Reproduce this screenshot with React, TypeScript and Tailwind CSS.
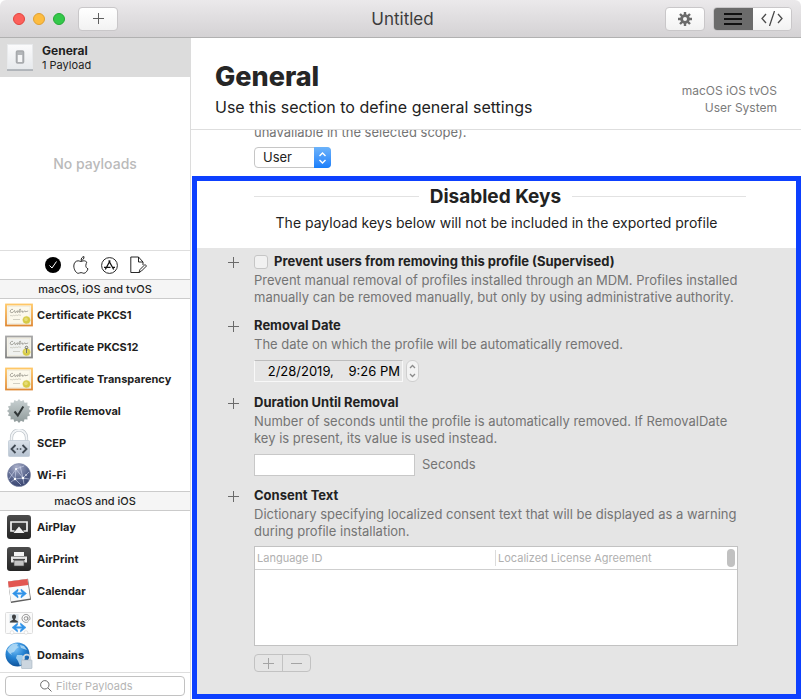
import type { ReactNode } from "react";

const PlusGlyph = ({ className = "" }: { className?: string }) => (
  <svg width="11" height="11" viewBox="0 0 11 11" className={className} aria-hidden="true">
    <path d="M5.5 0v11M0 5.5h11" stroke="currentColor" strokeWidth="1" fill="none" />
  </svg>
);

const GearIcon = () => (
  <svg width="14" height="14" viewBox="0 0 14 14" aria-hidden="true">
    <g stroke="#6b6b6b" strokeWidth="2.4">
      <path d="M7 0v14M0 7h14M2 2l10 10M12 2L2 12" />
    </g>
    <circle cx="7" cy="7" r="4.8" fill="#6b6b6b" />
    <circle cx="7" cy="7" r="2" fill="#f8f8f8" />
  </svg>
);

const GeneralIcon = () => (
  <svg width="26" height="27" viewBox="0 0 26 27" aria-hidden="true">
    <defs>
      <linearGradient id="plate" x1="0" y1="0" x2="0" y2="1">
        <stop offset="0" stopColor="#fbfbfc" />
        <stop offset="1" stopColor="#e6e9ec" />
      </linearGradient>
    </defs>
    <rect x="0.5" y="0.5" width="25" height="25" fill="url(#plate)" stroke="#e8eaec" />
    <path d="M0 26h26" stroke="#9da3a9" strokeWidth="1.4" />
    <rect x="9.5" y="7" width="7" height="12" rx="1" fill="#b4b7ba" stroke="#a6a9ac" strokeWidth="1.6" />
    <rect x="10.8" y="11" width="4.4" height="7" fill="#f5f6f7" />
  </svg>
);

const CertificateIcon = ({ gray = false }: { gray?: boolean }) => {
  const id = gray ? "certGray" : "certGold";
  return (
    <svg width="28" height="24" viewBox="0 0 28 24" aria-hidden="true">
      <defs>
        <linearGradient id={id} x1="0" y1="0" x2="0" y2="1">
          <stop offset="0" stopColor={gray ? "#a5a5a5" : "#ffc766"} />
          <stop offset="1" stopColor={gray ? "#858585" : "#e08a35"} />
        </linearGradient>
      </defs>
      <rect x="1" y="1.5" width="26" height="21" fill="#f9f7ee" stroke={`url(#${id})`} strokeWidth="1.8" />
      <rect x="3" y="3.5" width="22" height="17" fill={gray ? "#f0f1ef" : "#fcf9ec"} stroke="#e7e2d2" strokeWidth="0.5" />
      <path
        d="M8 6.400c-3-.8-4 3.800-1 3.200 2-.3 1.500-2 2.600-2s-.6 2.200.8 2c1-.2.9-1.900 2-1.800s-.8 2 .4 1.700 1.500-4 2.500-3.400-2 3.600-.5 3.300 1.300-1.700 2.300-1.700-.4 1.900.8 1.700 1-1.700 2-1.600-.2 1.600 1.300.8l2-.6"
        fill="none"
        stroke="#77766d"
        strokeWidth="0.6"
      />
      <path d="M5 13c1-1.600 2 .8 3-.4s1.400.9 2.400-.2 1.500.9 2.600-.2 1.600.7 3-.1M8 16.500h7" fill="none" stroke="#b3b2a6" strokeWidth="0.6" />
      <circle cx="21.500" cy="17" r="3.600" fill="#d6ca45" stroke="#d6ca45" strokeWidth="0.800" strokeDasharray="1 .6" />
      <circle cx="21" cy="16.400" r="1.800" fill="#e6dc74" />
      {gray && <path d="M21.500 18v-5M20.200 12.500a1.300 1.300 0 1 1 2.600 0 1.300 1.300 0 0 1-2.600 0" fill="none" stroke="#77786e" strokeWidth="1" />}
    </svg>
  );
};

const sealPoints = Array.from({ length: 32 }, (_, i) => {
  const r = i % 2 === 0 ? 12 : 10;
  const a = (i * Math.PI) / 16;
  return `${(12 + r * Math.sin(a)).toFixed(2)},${(12 - r * Math.cos(a)).toFixed(2)}`;
}).join(" ");

const SealIcon = () => (
  <svg width="24" height="24" viewBox="0 0 24 24" aria-hidden="true">
    <defs>
      <linearGradient id="seal" x1="0" y1="0" x2="0" y2="1">
        <stop offset="0" stopColor="#c9d1d2" />
        <stop offset="1" stopColor="#8f9a9a" />
      </linearGradient>
    </defs>
    <polygon points={sealPoints} fill="url(#seal)" />
    <path d="M7.500 12.500l3.300 4 5.500-9" fill="none" stroke="#303637" strokeWidth="2" />
  </svg>
);

const LockIcon = () => (
  <svg width="22" height="28" viewBox="0 0 22 28" aria-hidden="true">
    <defs>
      <linearGradient id="lock" x1="0" y1="0" x2="0" y2="1">
        <stop offset="0" stopColor="#dbe2ea" />
        <stop offset="1" stopColor="#b7c3d1" />
      </linearGradient>
    </defs>
    <path d="M3.500 13V8.500a7.500 7.500 0 0 1 15 0V13" fill="none" stroke="#b9c0c7" strokeWidth="3.200" />
    <path d="M3.500 13V8.500a7.500 7.500 0 0 1 15 0V13" fill="none" stroke="#f3f5f7" strokeWidth="1.900" />
    <rect x="0.500" y="11.500" width="21" height="16" rx="1" fill="url(#lock)" stroke="#bfcad5" strokeWidth="0.800" />
    <path d="M7.500 16l-4 4 4 4M14.500 16l4 4-4 4" fill="none" stroke="#3f4852" strokeWidth="1.800" />
    <path d="M8.700 20h1.500M11.800 20h1.500" stroke="#3f4852" strokeWidth="1.500" />
  </svg>
);

const WifiIcon = () => (
  <svg width="24" height="24" viewBox="0 0 24 24" aria-hidden="true">
    <defs>
      <radialGradient id="net" cx=".4" cy=".15" r=".9">
        <stop offset="0" stopColor="#a9afc9" />
        <stop offset=".55" stopColor="#5d6990" />
        <stop offset="1" stopColor="#323e6b" />
      </radialGradient>
    </defs>
    <circle cx="12" cy="12" r="11.500" fill="url(#net)" stroke="#7c86a6" strokeWidth="0.600" />
    <g fill="none" stroke="#d4daf0" strokeWidth="0.600">
      <path d="M2 16L9 6l7 9 6-6M9 6l-1 10 8-1 1 6M8 16l6 6M16 15L13 3M9 6l8-3M2 9l6 7-4 3M16 15l6 1" />
    </g>
    <g fill="#fff">
      <circle cx="9" cy="6" r="1" />
      <circle cx="16" cy="15" r="1.300" />
      <circle cx="8" cy="16" r="1.200" />
      <circle cx="19" cy="12" r=".8" />
    </g>
  </svg>
);

const DarkTile = ({ children }: { children: ReactNode }) => (
  <svg width="24" height="24" viewBox="0 0 24 24" aria-hidden="true">
    <defs>
      <linearGradient id="dark" x1="0" y1="0" x2="0" y2="1">
        <stop offset="0" stopColor="#4c4c4c" />
        <stop offset="1" stopColor="#252525" />
      </linearGradient>
    </defs>
    <rect width="24" height="24" rx="3" fill="url(#dark)" />
    {children}
  </svg>
);

const AirPlayIcon = () => (
  <DarkTile>
    <path d="M7.500 16H4V7h16v9h-3.500" fill="none" stroke="#f2f2f2" strokeWidth="1.700" />
    <path d="M12 11.500l5.500 6.500h-11z" fill="#f2f2f2" />
  </DarkTile>
);

const AirPrintIcon = () => (
  <DarkTile>
    <path d="M7 5h10v4H7z" fill="#f2f2f2" />
    <path d="M4 9.500h16v6H4z" fill="#e4e4e4" />
    <path d="M6 12.500h12" stroke="#444" strokeWidth="1.200" />
    <path d="M7 13.500h10v5.500H7z" fill="#c4c4c4" stroke="#444" strokeWidth=".6" />
  </DarkTile>
);

const arrowPath = "M5.500 0L0 4.500 5.500 9V7L3.800 5.300h6.400L8.500 7v2L14 4.500 8.500 0v2l1.700 1.700H3.800L5.500 2z";

const CalendarIcon = () => (
  <svg width="25" height="26" viewBox="0 0 25 26" aria-hidden="true">
    <path d="M1 3.500L21 .800l3 21L4 25z" fill="#5f5f5f" />
    <path d="M1 3.500L20.500 1l2.600 19.500L4 23.500z" fill="#fafafa" />
    <path d="M1 3.500L20.500 1l.8 6L1.800 9.500z" fill="#e25650" />
    <path d={arrowPath} transform="translate(5.500 11)" fill="#3193e8" stroke="#3193e8" strokeWidth=".5" />
  </svg>
);

const ContactsIcon = () => (
  <svg width="28" height="24" viewBox="0 0 28 24" aria-hidden="true">
    <rect x="0.500" y="1.500" width="27" height="21" rx="1" fill="#fbfbfb" stroke="#dedede" />
    <rect x="4.500" y="3" width="9" height="9" fill="#dbe4ea" />
    <path d="M9 3.500c1.600 0 2 1.200 2 2.200 0 1.200-.6 1.800-1 2.500 0 1.200 3 1 3.200 3.300H4.800C5 9.200 8 9.400 8 8.200 7.600 7.500 7 6.900 7 5.700c0-1 .4-2.200 2-2.200z" fill="#3f4143" />
    <g fill="none" stroke="#8c8c8c" strokeWidth=".9">
      <circle cx="21" cy="7.500" r="1.800" />
      <path d="M22.800 5.500v3c0 1.500 2.200 1 2.200-1.200a4 4 0 1 0-1.700 3.400" />
    </g>
    <path d={arrowPath} transform="translate(7 12)" fill="#3193e8" stroke="#3193e8" strokeWidth=".5" />
    <circle cx="7" cy="21.500" r="1.800" fill="#fff" stroke="#d8d8d8" strokeWidth=".7" />
    <circle cx="21" cy="21.500" r="1.800" fill="#fff" stroke="#d8d8d8" strokeWidth=".7" />
  </svg>
);

const DomainsIcon = () => (
  <svg width="28" height="27" viewBox="0 0 28 27" aria-hidden="true">
    <defs>
      <radialGradient id="globe" cx=".4" cy=".25" r=".8">
        <stop offset="0" stopColor="#7cc4f8" />
        <stop offset=".5" stopColor="#2583d3" />
        <stop offset="1" stopColor="#0b4c92" />
      </radialGradient>
    </defs>
    <circle cx="12.500" cy="12.500" r="12" fill="url(#globe)" />
    <path d="M5 4c3-3 6-3 8-2l-1 2 2 1-3 2-2 3-3 1 1 2-3-2-2-3zM15 3l4 1 3 4-3-1-3-1zM12 13l5 0 3 3-2 4-3 4-2-5-2-3z" fill="#b3daf5" opacity=".85" />
    <path d="M18.500 19v-3a3.300 3.300 0 0 1 6.600 0v3" fill="none" stroke="#d3dbe1" strokeWidth="1.800" />
    <rect x="16.500" y="18" width="10.500" height="8.500" rx=".6" fill="#ccd6df" stroke="#a5b3c0" strokeWidth=".6" />
  </svg>
);

const tabs: { label: string; icon: ReactNode }[] = [
  {
    label: "All payloads",
    icon: (
      <svg width="16" height="16" viewBox="0 0 16 16">
        <circle cx="8" cy="8" r="8" fill="#000" />
        <path d="M4.500 8.500L7 11l4.500-6.500" fill="none" stroke="#fff" strokeWidth="1" />
      </svg>
    ),
  },
  {
    label: "Apple",
    icon: (
      <svg width="16" height="18" viewBox="0 0 16 18" fill="none" stroke="#111" strokeWidth=".9">
        <path d="M13.800 6.200C12.900 5.200 11.800 4.800 10.800 4.800c-1.200 0-1.800.7-2.700.7S6.400 4.800 5.200 4.800C2.700 4.800.8 6.900.8 10c0 3.500 2.400 7.300 4.400 7.300 1.100 0 1.600-.7 2.900-.7s1.700.7 2.800.7c1.800 0 3.600-2.700 4.100-4.500-1.400-.6-2.200-1.700-2.200-3.300 0-1.500.8-2.600 1-3.300z" />
        <path d="M8.100 4.400C8 2.400 9.200.8 11 .6c.2 2-1.100 3.600-2.900 3.800z" />
      </svg>
    ),
  },
  {
    label: "Applications",
    icon: (
      <svg width="17" height="17" viewBox="0 0 17 17" fill="none" stroke="#111">
        <circle cx="8.500" cy="8.500" r="7.900" strokeWidth=".9" />
        <path d="M9.200 3.500L4.300 12.500M7.700 3.500l5 9M3 10.300h6.500M11.700 10.300H14" strokeWidth="1.300" />
      </svg>
    ),
  },
  {
    label: "Custom",
    icon: (
      <svg width="17" height="18" viewBox="0 0 17 18" fill="none" stroke="#111" strokeWidth=".9">
        <path d="M13 9V6L8.500 1H.800v15.500h8.500M8.500 1v5H13M9 16.500l1-3 5-5 1.500 1.500-5 5z" />
      </svg>
    ),
  },
];

const groups: { title: string; items: { name: string; icon: ReactNode }[] }[] = [
  {
    title: "macOS, iOS and tvOS",
    items: [
      { name: "Certificate PKCS1", icon: <CertificateIcon /> },
      { name: "Certificate PKCS12", icon: <CertificateIcon gray /> },
      { name: "Certificate Transparency", icon: <CertificateIcon /> },
      { name: "Profile Removal", icon: <SealIcon /> },
      { name: "SCEP", icon: <LockIcon /> },
      { name: "Wi-Fi", icon: <WifiIcon /> },
    ],
  },
  {
    title: "macOS and iOS",
    items: [
      { name: "AirPlay", icon: <AirPlayIcon /> },
      { name: "AirPrint", icon: <AirPrintIcon /> },
      { name: "Calendar", icon: <CalendarIcon /> },
      { name: "Contacts", icon: <ContactsIcon /> },
      { name: "Domains", icon: <DomainsIcon /> },
    ],
  },
];

function Toolbar() {
  return (
    <header className="grid h-[38px] shrink-0 grid-cols-3 items-center rounded-t-md border-b border-[#b1b1b1] bg-linear-to-b from-[#ebe9eb] to-[#d4d2d4] pr-[9px] pl-[13px]">
      <div className="flex items-center gap-2">
        <button aria-label="Close" className="size-3 rounded-full border border-[#e2443e] bg-[#fc605b]" />
        <button aria-label="Minimize" className="size-3 rounded-full border border-[#dfa032] bg-[#fdbc40]" />
        <button aria-label="Zoom" className="size-3 rounded-full border border-[#24a936] bg-[#34c84a]" />
        <button
          aria-label="Add"
          className="ml-[5px] flex h-6 w-10 items-center justify-center rounded border border-[#c9c7c9] bg-linear-to-b from-white to-[#f2f2f2] text-[#5f5f5f]"
        >
          <PlusGlyph />
        </button>
      </div>
      <h1 className="pt-0.5 text-center text-[17px] text-[#3c3c3c]">Untitled</h1>
      <div className="flex items-center justify-end gap-2">
        <button
          aria-label="Settings"
          className="flex h-6 w-10 items-center justify-center rounded border border-[#c9c7c9] bg-linear-to-b from-white to-[#f2f2f2]"
        >
          <GearIcon />
        </button>
        <div className="flex h-6 overflow-hidden rounded border border-[#c9c7c9]">
          <button aria-label="List view" className="flex w-[39px] items-center justify-center bg-[#6b6b6b]">
            <svg width="18" height="12" viewBox="0 0 18 12" aria-hidden="true">
              <path d="M0 1h18M0 6h18M0 11h18" stroke="#111" strokeWidth="2" />
            </svg>
          </button>
          <button aria-label="Source view" className="flex w-[38px] items-center justify-center bg-linear-to-b from-white to-[#f2f2f2]">
            <svg width="22" height="15" viewBox="0 0 22 15" fill="none" stroke="#4c4c4c" strokeWidth="1.300" aria-hidden="true">
              <path d="M5 3L1 7.500 5 12M17 3l4 4.500L17 12M13.500 0l-5 15" />
            </svg>
          </button>
        </div>
      </div>
    </header>
  );
}

function Sidebar() {
  return (
    <aside className="flex w-[191px] shrink-0 flex-col border-r border-[#dcdcdc]">
      <button className="flex h-[39px] shrink-0 items-center gap-[9px] bg-[#dcdcdc] pl-[7px] text-left">
        <GeneralIcon />
        <span className="flex flex-col">
          <span className="text-[12px] leading-[15px] font-bold text-[#1f1f1f]">General</span>
          <span className="text-[11px] leading-[14px]">1 Payload</span>
        </span>
      </button>
      <p className="flex flex-1 items-center justify-center text-[14px] font-medium text-[#bababa]">No payloads</p>
      <nav aria-label="Payload library" className="flex h-[29px] items-center justify-center gap-3 border-t border-[#dedede] pl-px">
        {tabs.map((t) => (
          <button key={t.label} aria-label={t.label}>
            {t.icon}
          </button>
        ))}
      </nav>
      {groups.map((g) => (
        <section key={g.title}>
          <h2 className="h-5 border-y border-[#cbcbcb] bg-[#f5f5f5] text-center text-[11px] leading-[18px] font-medium text-[#1f1f1f]">{g.title}</h2>
          <ul>
            {g.items.map((item) => (
              <li key={item.name} className="flex h-8 items-center gap-1 pl-[5px]">
                <span className="flex w-7 justify-center">{item.icon}</span>
                <span className="text-[11px] font-bold text-[#1f1f1f]">{item.name}</span>
              </li>
            ))}
          </ul>
        </section>
      ))}
      <div className="mt-px border-t border-[#dedede] px-[5px] pt-[3px] pb-1">
        <label className="flex h-5 items-center justify-center gap-1 rounded border border-[#c2c2c2]">
          <svg width="12" height="12" viewBox="0 0 12 12" fill="none" stroke="#6b6b6b" aria-hidden="true">
            <circle cx="4.800" cy="4.800" r="4.200" />
            <path d="M8 8l3.500 3.500" />
          </svg>
          <input aria-label="Filter Payloads" placeholder="Filter Payloads" className="w-[94px] text-[11px] outline-none placeholder:text-[#b5b5b5]" />
        </label>
      </div>
    </aside>
  );
}

function Key({ title, description, checkbox = false, children }: { title: string; description: string; checkbox?: boolean; children?: ReactNode }) {
  return (
    <div className="flex">
      <button aria-label={`Enable ${title}`} className="mt-1.5 mr-[15px] size-[11px] shrink-0 text-[#6a6a6a]">
        <PlusGlyph />
      </button>
      <div className="min-w-0 flex-1">
        <h3 className="text-[13px] leading-[21px] font-bold text-[#222]">
          {checkbox ? (
            <label className="flex items-center gap-1.5">
              <input type="checkbox" disabled className="size-3.5 appearance-none rounded-[3px] border border-[#c6c6c6] bg-[#f1f1f1]" />
              {title}
            </label>
          ) : (
            title
          )}
        </h3>
        <p className="text-[13px] leading-[17px] text-[#747474]">{description}</p>
        {children}
      </div>
    </div>
  );
}

function DisabledKeys() {
  return (
    <section className="ml-px flex flex-1 flex-col border-[5px] border-[#0d40ff]">
      <div className="pt-px pb-3">
        <div className="flex items-center gap-[11px] pr-[50px] pl-[57px]">
          <span className="h-px flex-[18] bg-[#e2e2e2]" />
          <h2 className="pt-px text-[19px] leading-[27px] font-bold text-[#222]">Disabled Keys</h2>
          <span className="h-px flex-[19] bg-[#e2e2e2]" />
        </div>
        <p className="text-center text-[14px] leading-[26px] text-[#222]">The payload keys below will not be included in the exported profile</p>
      </div>
      <div className="flex flex-1 flex-col gap-[9px] bg-[#e5e5e5] pt-[3px] pr-[58px] pb-5 pl-[31px]">
        <Key
          checkbox
          title="Prevent users from removing this profile (Supervised)"
          description="Prevent manual removal of profiles installed through an MDM. Profiles installed manually can be removed manually, but only by using administrative authority."
        />
        <Key title="Removal Date" description="The date on which the profile will be automatically removed.">
          <div className="mt-1.5 flex h-6 items-center gap-[3px]">
            <input
              aria-label="Removal Date"
              readOnly
              value="2/28/2019,    9:26 PM"
              className="h-[22px] w-[149px] border border-t-[#bdbdbd] border-r-[#f8f8f8] border-b-[#f8f8f8] border-l-[#f8f8f8] pr-0.5 text-right text-[13px] whitespace-pre text-black outline-none"
            />
            <button aria-label="Step date" className="flex h-[22px] w-[13px] items-center justify-center rounded-md border border-[#cfcfcf] bg-[#f3f3f3]">
              <svg width="7" height="14" viewBox="0 0 7 14" fill="none" stroke="#8b8b8b" strokeWidth="1.300" aria-hidden="true">
                <path d="M1 4l2.500-2.500L6 4M1 10l2.500 2.500L6 10" />
              </svg>
            </button>
          </div>
        </Key>
        <Key
          title="Duration Until Removal"
          description="Number of seconds until the profile is automatically removed. If RemovalDate key is present, its value is used instead."
        >
          <label className="mt-1.5 flex h-[23px] items-center gap-[7px] text-[13px] text-[#747474]">
            <input className="h-[22px] w-[161px] border border-[#c8c8c8] bg-white px-1 outline-none" />
            Seconds
          </label>
        </Key>
        <Key
          title="Consent Text"
          description="Dictionary specifying localized consent text that will be displayed as a warning during profile installation."
        >
          <div className="relative mt-1.5 h-[100px] border border-[#c2c2c2] bg-white">
            <table className="w-full table-fixed border-collapse text-left text-[11px] text-[#b0b0b0]">
              <thead>
                <tr className="h-[22px] border-b border-[#cfcfcf]">
                  <th className="w-[240px] p-0 pl-0.5 font-normal">Language ID</th>
                  <th className="p-0 font-normal">
                    <span className="block border-l border-[#dcdcdc] pl-0.5">Localized License Agreement</span>
                  </th>
                </tr>
              </thead>
            </table>
            <span className="absolute top-0.5 right-0.5 h-[18px] w-2 rounded-full bg-[#c1c1c1]" />
          </div>
          <div className="mt-2 flex h-[18px] w-[57px] divide-x divide-[#c2c2c2] rounded border border-[#c2c2c2] text-[#a4a4a4]">
            <button aria-label="Add row" className="flex flex-1 items-center justify-center">
              <PlusGlyph />
            </button>
            <button aria-label="Remove row" className="flex flex-1 items-center justify-center">
              <svg width="11" height="11" viewBox="0 0 11 11" aria-hidden="true">
                <path d="M0 5.500h11" stroke="currentColor" />
              </svg>
            </button>
          </div>
        </Key>
      </div>
    </section>
  );
}

export default function App() {
  return (
    <div className="flex min-h-screen flex-col bg-white font-['Inter',sans-serif] text-[#222]">
      <Toolbar />
      <div className="flex flex-1">
        <Sidebar />
        <main className="flex min-w-0 flex-1 flex-col pb-px">
          <header className="flex items-center justify-between border-b border-[#dedede] pt-[22px] pr-6 pb-[9px] pl-6">
            <div>
              <h1 className="text-[27px] leading-[34px] font-extrabold text-[#262626]">General</h1>
              <p className="text-[16px] leading-[26px]">Use this section to define general settings</p>
            </div>
            <p className="pt-[17px] text-right text-[12px] leading-[17px] text-[#7b7b7b]">
              macOS iOS tvOS
              <br />
              User System
            </p>
          </header>
          <div className="flex flex-1 flex-col overflow-hidden">
            <p className="-mt-[6px] pl-[63px] text-[13px] leading-[17px] text-[#747474]">unavailable in the selected scope).</p>
            <div className="relative mt-1.5 mb-2 ml-[63px] h-[21px] w-[77px]">
              <select
                aria-label="Payload scope"
                className="block h-full w-full appearance-none rounded border border-[#c6c6c6] bg-white pl-2 text-[13px] leading-[19px]"
              >
                <option>User</option>
              </select>
              <span className="pointer-events-none absolute inset-y-0 right-0 flex w-[17px] items-center justify-center rounded-r bg-linear-to-b from-[#6cb3fa] to-[#167efb]">
                <svg width="9" height="14" viewBox="0 0 9 14" fill="none" stroke="#fff" strokeWidth="1.400" aria-hidden="true">
                  <path d="M1.500 5l3-3 3 3M1.500 9l3 3 3-3" />
                </svg>
              </span>
            </div>
            <DisabledKeys />
          </div>
        </main>
      </div>
    </div>
  );
}
